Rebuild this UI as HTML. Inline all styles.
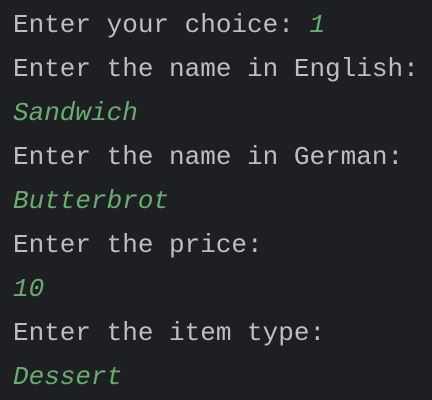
<!DOCTYPE html>
<html><head><style>
html,body{margin:0;padding:0;background:#1e1f22;width:432px;height:400px;overflow:hidden}
pre{margin:0;position:absolute;left:13px;top:3px;font-family:"Liberation Mono",monospace;font-size:26px;line-height:44px;color:#bcbec4}
i{color:#6aab73}
</style></head><body>
<pre>Enter your choice: <i>1</i>
Enter the name in English:
<i>Sandwich</i>
Enter the name in German:
<i>Butterbrot</i>
Enter the price:
<i>10</i>
Enter the item type:
<i>Dessert</i></pre>
</body></html>
